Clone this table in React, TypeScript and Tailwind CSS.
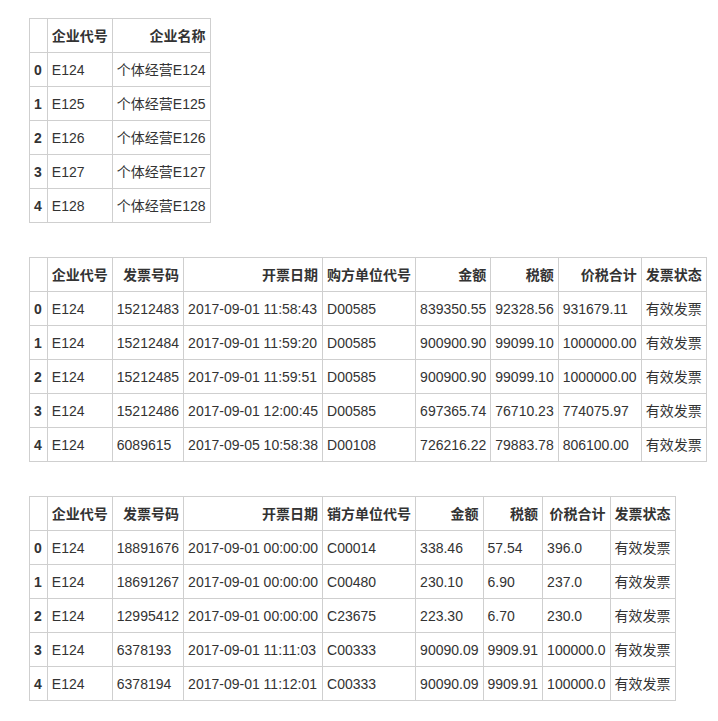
const companies = {
  columns: ["企业代号", "企业名称"],
  rows: [
    ["E124", "个体经营E124"],
    ["E125", "个体经营E125"],
    ["E126", "个体经营E126"],
    ["E127", "个体经营E127"],
    ["E128", "个体经营E128"],
  ],
};

const purchases = {
  columns: ["企业代号", "发票号码", "开票日期", "购方单位代号", "金额", "税额", "价税合计", "发票状态"],
  rows: [
    ["E124", "15212483", "2017-09-01 11:58:43", "D00585", "839350.55", "92328.56", "931679.11", "有效发票"],
    ["E124", "15212484", "2017-09-01 11:59:20", "D00585", "900900.90", "99099.10", "1000000.00", "有效发票"],
    ["E124", "15212485", "2017-09-01 11:59:51", "D00585", "900900.90", "99099.10", "1000000.00", "有效发票"],
    ["E124", "15212486", "2017-09-01 12:00:45", "D00585", "697365.74", "76710.23", "774075.97", "有效发票"],
    ["E124", "6089615", "2017-09-05 10:58:38", "D00108", "726216.22", "79883.78", "806100.00", "有效发票"],
  ],
};

const sales = {
  columns: ["企业代号", "发票号码", "开票日期", "销方单位代号", "金额", "税额", "价税合计", "发票状态"],
  rows: [
    ["E124", "18891676", "2017-09-01 00:00:00", "C00014", "338.46", "57.54", "396.0", "有效发票"],
    ["E124", "18691267", "2017-09-01 00:00:00", "C00480", "230.10", "6.90", "237.0", "有效发票"],
    ["E124", "12995412", "2017-09-01 00:00:00", "C23675", "223.30", "6.70", "230.0", "有效发票"],
    ["E124", "6378193", "2017-09-01 11:11:03", "C00333", "90090.09", "9909.91", "100000.0", "有效发票"],
    ["E124", "6378194", "2017-09-01 11:12:01", "C00333", "90090.09", "9909.91", "100000.0", "有效发票"],
  ],
};

type Frame = { columns: string[]; rows: string[][] };

// pandas-style table: bold right-aligned headers, bold index, left-aligned values
const DataFrame = ({ data }: { data: Frame }) => {
  return (
    <table className="border-collapse text-[14px] leading-[20px] text-[#333]">
      <thead>
        <tr>
          <th className="border border-[#cfcfcf] h-[34px] pl-[4px] pr-[5px]"></th>
          {data.columns.map((c) => (
            <th key={c} className="border border-[#cfcfcf] h-[34px] px-[4px] text-right font-bold whitespace-nowrap">
              {c}
            </th>
          ))}
        </tr>
      </thead>
      <tbody>
        {data.rows.map((row, i) => (
          <tr key={i}>
            <th className="border border-[#cfcfcf] h-[34px] pl-[4px] pr-[5px] font-bold text-left">{i}</th>
            {row.map((v, j) => (
              <td key={j} className="border border-[#cfcfcf] h-[34px] px-[4px] text-left whitespace-nowrap">
                {v}
              </td>
            ))}
          </tr>
        ))}
      </tbody>
    </table>
  );
};

const App = () => {
  return (
    <div
      className="min-h-screen bg-white pl-[29px] pt-[18px] flex flex-col gap-[34px] items-start"
      style={{ fontFamily: '"Liberation Sans", "Noto Sans CJK SC", sans-serif' }}
    >
      <DataFrame data={companies} />
      <DataFrame data={purchases} />
      <DataFrame data={sales} />
    </div>
  );
};

export default App;
